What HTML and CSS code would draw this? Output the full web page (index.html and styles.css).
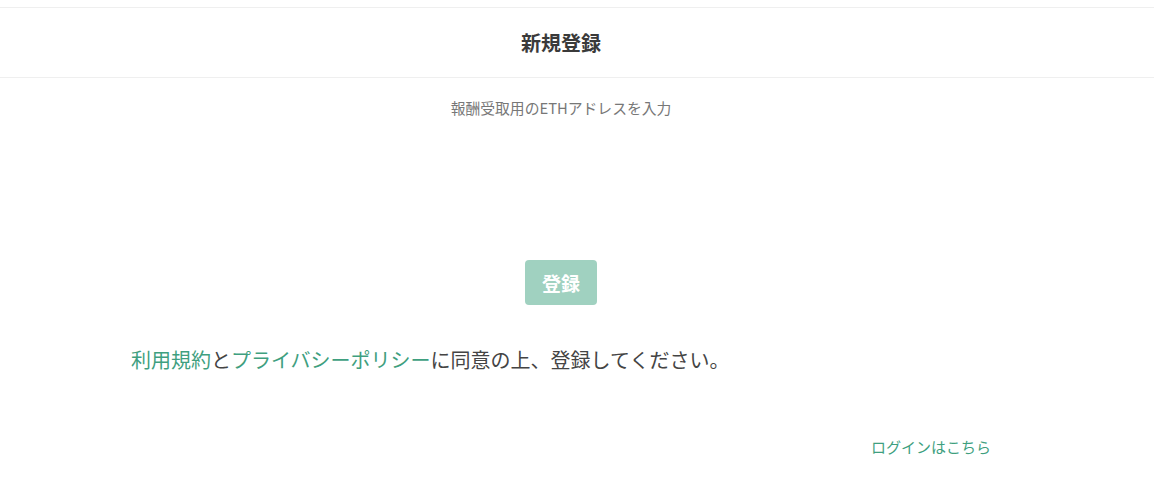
FILE: index.html
```html
<!DOCTYPE html>
<html lang="ja">
<head>
<meta charset="utf-8">
<title>新規登録</title>
<link rel="stylesheet" href="styles.css">
</head>
<body>
<header class="topbar">
  <div class="topbar-inner">
    <h1 class="title">新規登録</h1>
  </div>
</header>
<main class="page">
  <p class="subtitle">報酬受取用のETHアドレスを入力</p>
  <div class="actions">
    <button class="submit" type="button" disabled>登録</button>
  </div>
  <div class="panel">
    <p class="agree"><a class="link" href="#">利用規約</a>と<a class="link" href="#">プライバシーポリシー</a>に同意の上、登録してください。</p>
    <p class="login"><a class="link" href="#">ログインはこちら</a></p>
  </div>
</main>
</body>
</html>
```

FILE: styles.css
```css
* { box-sizing: border-box; }
html, body { margin: 0; padding: 0; background: #fff; }
body {
  font-family: "Noto Sans CJK JP", "Noto Sans", sans-serif;
  color: #444;
}
.topbar {
  margin-top: 7px;
  border-top: 1px solid #efefef;
  border-bottom: 1px solid #efefef;
  height: 71px;
}
.topbar-inner {
  padding-right: 32px;
  height: 100%;
  display: flex;
  align-items: center;
  justify-content: center;
}
.title {
  margin: 0;
  font-size: 20px;
  font-weight: 700;
  color: #3a3a3a;
  line-height: 28px;
}
.page {
  padding-right: 32px;
}
.subtitle {
  margin: 20px 0 0;
  text-align: center;
  font-size: 14.8px;
  line-height: 20px;
  color: #777;
}
.actions {
  margin-top: 142px;
  display: flex;
  justify-content: center;
}
.submit {
  width: 72px;
  height: 45px;
  border: none;
  border-radius: 4px;
  background: #a0d1c0;
  color: #fff;
  font-family: inherit;
  font-size: 19px;
  font-weight: 700;
  padding: 0;
}
.panel {
  width: 860px;
  margin: 0 auto;
}
.agree {
  margin: 40px 0 0;
  font-size: 20px;
  line-height: 30px;
  color: #444;
}
.link {
  color: #3f9f7f;
  text-decoration: none;
}
.login {
  margin: 61px 0 0;
  text-align: right;
  font-size: 15px;
  line-height: 22px;
}
```
